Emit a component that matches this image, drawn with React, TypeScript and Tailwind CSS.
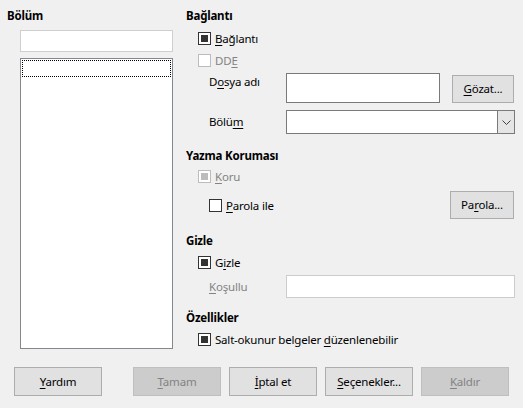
import React from "react";

const U = ({ children }: { children: React.ReactNode }) => (
  <span className="underline decoration-1 underline-offset-[2px]">{children}</span>
);

function Check({ checked, disabled }: { checked?: boolean; disabled?: boolean }) {
  return (
    <span
      className={
        "flex h-[13px] w-[13px] shrink-0 items-center justify-center border bg-white " +
        (disabled ? "border-[#bcbcbc]" : "border-[#333333]")
      }
    >
      {checked && (
        <span className={"h-[7px] w-[7px] " + (disabled ? "bg-[#bcbcbc]" : "bg-[#333333]")} />
      )}
    </span>
  );
}

function CheckRow({
  checked,
  disabled,
  children,
  className = "",
}: {
  checked?: boolean;
  disabled?: boolean;
  children: React.ReactNode;
  className?: string;
}) {
  return (
    <div className={"flex h-[13px] items-center gap-[4px] " + className}>
      <Check checked={checked} disabled={disabled} />
      <span className={"leading-[13px] " + (disabled ? "text-[#838383]" : "text-black")}>{children}</span>
    </div>
  );
}

function Btn({
  children,
  disabled,
  className = "",
}: {
  children: React.ReactNode;
  disabled?: boolean;
  className?: string;
}) {
  return (
    <div
      className={
        "flex items-center justify-center border " +
        (disabled
          ? "border-[#bfbfbf] bg-[#cccccc] text-[#838383]"
          : "border-[#adadad] bg-[#e1e1e1] text-black") +
        " " +
        className
      }
    >
      {children}
    </div>
  );
}

function Title({ children, className = "" }: { children: React.ReactNode; className?: string }) {
  return <div className={"h-[16px] font-bold leading-[16px] " + className}>{children}</div>;
}

export default function App() {
  return (
    <div
      className="flex h-[408px] w-[523px] flex-col bg-[#f0f0f0] text-[11.5px] tracking-[-0.2px] text-black"
      style={{ fontFamily: '"Noto Sans", "Open Sans", sans-serif' }}
    >
      <div className="flex pt-[8px]">
        {/* Left column */}
        <div className="flex w-[186px] flex-col">
          <Title className="pl-[7px]">Bölüm</Title>
          <div className="ml-[20px] mt-[6px] h-[22px] w-[153px] border border-[#cfcfcf] bg-white" />
          <div className="ml-[20px] mt-[6px] h-[291px] w-[153px] border border-[#828790] bg-white p-[1px]">
            <div className="h-[17px] border border-dotted border-black" />
          </div>
        </div>

        {/* Right column */}
        <div className="flex w-[329px] flex-col">
          <Title>Bağlantı</Title>
          <CheckRow checked className="ml-[12px] mt-[8px]">
            <U>B</U>ağlantı
          </CheckRow>
          <CheckRow disabled className="ml-[12px] mt-[9px]">
            DD<U>E</U>
          </CheckRow>
          <div className="mt-[6px] flex h-[30px] items-start">
            <div className="ml-[23px] mt-[1px] w-[77px] leading-[16px]">
              D<U>o</U>sya adı
            </div>
            <div className="h-[30px] w-[154px] border border-[#7a7a7a] bg-white" />
            <Btn className="ml-[12px] mt-[2px] h-[28px] w-[62px]">
              <span>
                <U>G</U>özat...
              </span>
            </Btn>
          </div>
          <div className="mt-[7px] flex h-[24px] items-center">
            <div className="ml-[23px] w-[77px]">
              Bölü<U>m</U>
            </div>
            <div className="flex h-[24px] w-[229px] border border-[#7a7a7a] bg-white">
              <div className="flex-1" />
              <div className="flex w-[17px] items-center justify-center border-l border-[#7a7a7a] bg-[#e5e5e5]">
                <svg width="9" height="5" viewBox="0 0 9 5">
                  <path d="M0.5 0.5 L4.5 4.5 L8.5 0.5" fill="none" stroke="#404040" strokeWidth="1" />
                </svg>
              </div>
            </div>
          </div>

          <Title className="mt-[14px]">Yazma Koruması</Title>
          <CheckRow checked disabled className="ml-[12px] mt-[6px]">
            <U>K</U>oru
          </CheckRow>
          <div className="mt-[8px] flex h-[28px] items-center">
            <CheckRow className="ml-[23px]">
              <U>P</U>arola ile
            </CheckRow>
            <div className="flex-1" />
            <Btn className="mr-[1px] h-[28px] w-[64px]">
              <span>
                Pa<U>r</U>ola...
              </span>
            </Btn>
          </div>

          <Title className="mt-[14px]">Gizle</Title>
          <CheckRow checked className="ml-[12px] mt-[7px]">
            G<U>i</U>zle
          </CheckRow>
          <div className="mt-[6px] flex h-[23px] items-center">
            <div className="ml-[23px] w-[77px] text-[#838383]">
              <U>K</U>oşullu
            </div>
            <div className="h-[23px] w-[229px] border border-[#cccccc] bg-white" />
          </div>

          <Title className="mt-[12px]">Özellikler</Title>
          <CheckRow checked className="ml-[12px] mt-[7px]">
            Salt-okunur belgeler <U>d</U>üzenlenebilir
          </CheckRow>
        </div>
      </div>

      <div className="ml-[14px] mt-[18px] flex h-[29px]">
        <Btn className="h-[29px] w-[88px]">
          <span>
            <U>Y</U>ardım
          </span>
        </Btn>
        <Btn disabled className="ml-[31px] h-[29px] w-[88px]">
          <span>
            <U>T</U>amam
          </span>
        </Btn>
        <Btn className="ml-[8px] h-[29px] w-[88px]">
          <span>
            <U>İ</U>ptal et
          </span>
        </Btn>
        <Btn className="ml-[8px] h-[29px] w-[88px]">
          <span>
            <U>S</U>eçenekler...
          </span>
        </Btn>
        <Btn disabled className="ml-[8px] h-[29px] w-[88px]">
          <span>
            <U>K</U>aldır
          </span>
        </Btn>
      </div>
    </div>
  );
}
